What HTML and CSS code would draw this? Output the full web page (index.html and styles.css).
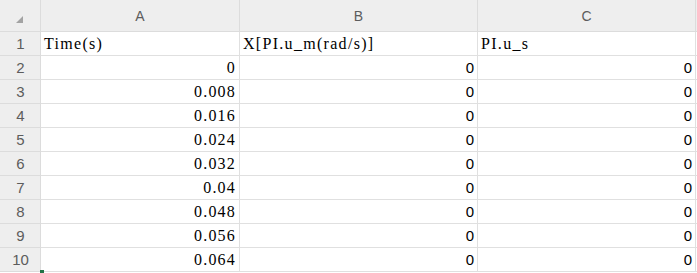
FILE: index.html
```html
<!DOCTYPE html>
<html>
<head>
<meta charset="utf-8">
<link rel="stylesheet" href="styles.css">
</head>
<body>
<div class="sheet">
  <div class="hdr corner"><span class="tri"></span></div>
  <div class="hdr col">A</div>
  <div class="hdr col">B</div>
  <div class="hdr col">C</div>
  <div class="hdr rest"></div>

  <div class="hdr rown">1</div>
  <div class="cell txt">Time(s)</div>
  <div class="cell txt">X[PI.u_m(rad/s)]</div>
  <div class="cell txt">PI.u_s</div>
  <div class="cell rest"></div>

  <div class="hdr rown">2</div>
  <div class="cell num ser">0</div>
  <div class="cell num">0</div>
  <div class="cell num">0</div>
  <div class="cell rest"></div>

  <div class="hdr rown">3</div>
  <div class="cell num ser">0.008</div>
  <div class="cell num">0</div>
  <div class="cell num">0</div>
  <div class="cell rest"></div>

  <div class="hdr rown">4</div>
  <div class="cell num ser">0.016</div>
  <div class="cell num">0</div>
  <div class="cell num">0</div>
  <div class="cell rest"></div>

  <div class="hdr rown">5</div>
  <div class="cell num ser">0.024</div>
  <div class="cell num">0</div>
  <div class="cell num">0</div>
  <div class="cell rest"></div>

  <div class="hdr rown">6</div>
  <div class="cell num ser">0.032</div>
  <div class="cell num">0</div>
  <div class="cell num">0</div>
  <div class="cell rest"></div>

  <div class="hdr rown">7</div>
  <div class="cell num ser">0.04</div>
  <div class="cell num">0</div>
  <div class="cell num">0</div>
  <div class="cell rest"></div>

  <div class="hdr rown">8</div>
  <div class="cell num ser">0.048</div>
  <div class="cell num">0</div>
  <div class="cell num">0</div>
  <div class="cell rest"></div>

  <div class="hdr rown">9</div>
  <div class="cell num ser">0.056</div>
  <div class="cell num">0</div>
  <div class="cell num">0</div>
  <div class="cell rest"></div>

  <div class="hdr rown">10</div>
  <div class="cell num ser">0.064</div>
  <div class="cell num">0</div>
  <div class="cell num">0</div>
  <div class="cell rest"></div>
</div>
<span class="handle"></span>
</body>
</html>
```

FILE: styles.css
```css
html, body {
  margin: 0;
  padding: 0;
  background: #ffffff;
  overflow: hidden;
}
body {
  position: relative;
  width: 697px;
  height: 273px;
}
.sheet {
  display: grid;
  grid-template-columns: 41px 199px 238px 218px 1fr;
  grid-template-rows: 32px repeat(10, 24px);
}
.hdr, .cell {
  box-sizing: border-box;
  border-right: 1px solid #e0e0e0;
  border-bottom: 1px solid #e0e0e0;
  display: flex;
  align-items: center;
  overflow: hidden;
  white-space: nowrap;
}
.hdr {
  background: #eeeeee;
  color: #5c5c5c;
  font-family: "Liberation Sans", Arial, sans-serif;
  border-color: #dcdcdc;
}
.corner {
  position: relative;
}
.tri {
  position: absolute;
  left: 16px;
  top: 16px;
  width: 0;
  height: 0;
  border-left: 7px solid transparent;
  border-bottom: 7px solid #a3a3a3;
}
.col {
  justify-content: center;
  font-size: 14px;
  padding-top: 1px;
}
.rown {
  justify-content: center;
  font-size: 15px;
  padding-left: 1px;
}
.rest {
  border-right: none;
}
.cell {
  color: #000000;
  background: #ffffff;
}
.txt {
  font-family: "Liberation Serif", "Times New Roman", serif;
  font-size: 16px;
  letter-spacing: 1.3px;
  padding-left: 3px;
}
.num {
  justify-content: flex-end;
  font-family: "Liberation Sans", Arial, sans-serif;
  font-size: 15px;
  padding-right: 3px;
}
.num.ser {
  font-family: "Liberation Serif", "Times New Roman", serif;
  font-size: 16px;
  letter-spacing: 1.2px;
  padding-right: 3px;
}
.handle {
  position: absolute;
  left: 40px;
  top: 270px;
  width: 4px;
  height: 3px;
  background: #217346;
}
```
